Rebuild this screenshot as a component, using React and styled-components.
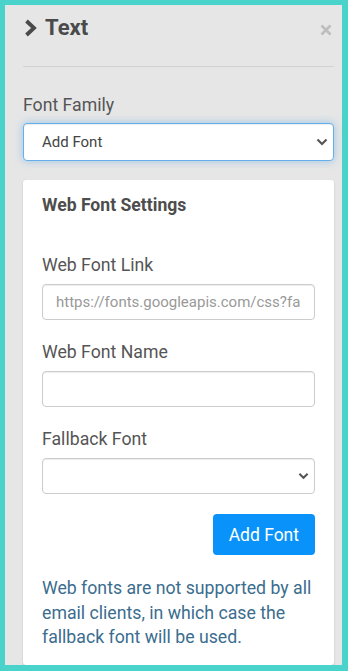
import React from "react";
import styled, { createGlobalStyle } from "styled-components";

const Global = createGlobalStyle`
  html, body { margin: 0; padding: 0; background: #fff; }
  body { font-family: Roboto, "Liberation Sans", Arial, sans-serif; }
  *, *::before, *::after { box-sizing: border-box; }
`;

const Frame = styled.div`
  width: 348px;
  height: 671px;
  border: 5px solid #4ad3cb;
  border-right-width: 6px;
  border-bottom-width: 6px;
  background: #e6e6e6;
  overflow: hidden;
`;

const Panel = styled.div`
  padding: 0 8px 0 18px;
`;

const Header = styled.div`
  display: flex;
  justify-content: space-between;
  align-items: flex-start;
  padding-top: 10px;
  margin-bottom: 25px;
`;

const Title = styled.h2`
  margin: 0;
  display: flex;
  align-items: center;
  gap: 8px;
  font-size: 22px;
  line-height: 26px;
  font-weight: 700;
  color: #4a4a4a;
  padding-left: 1px;
`;

const Close = styled.button`
  border: 0;
  background: none;
  padding: 0;
  margin: 9px 2px 0 0;
  width: 12px;
  height: 12px;
  display: flex;
  cursor: pointer;
`;

const Divider = styled.hr`
  margin: 0 0 26px;
  border: 0;
  border-top: 1px solid #d3d3d3;
`;

const Label = styled.label`
  display: block;
  font-size: 17.7px;
  line-height: 24.3px;
  color: #555;
  margin-bottom: ${(p) => p.$gap || 7}px;
`;

const SelectWrap = styled.div`
  position: relative;
  svg {
    position: absolute;
    right: ${(p) => p.$arrowRight}px;
    top: 50%;
    transform: translateY(-50%);
    pointer-events: none;
  }
`;

const Select = styled.select`
  display: block;
  width: 100%;
  height: ${(p) => (p.$focus ? 38 : 36)}px;
  appearance: none;
  -webkit-appearance: none;
  background: #fff;
  border: 1px solid ${(p) => (p.$focus ? "#66afe9" : "#ccc")};
  border-radius: 4px;
  box-shadow: ${(p) =>
    p.$focus
      ? "inset 0 1px 1px rgba(0,0,0,.075), 0 0 8px rgba(102,175,233,.6)"
      : "inset 0 1px 1px rgba(0,0,0,.075)"};
  padding: 0 30px 0 18px;
  font-family: inherit;
  font-size: 15px;
  color: #444;
  outline: none;
`;

const Card = styled.div`
  margin-top: 19px;
  background: #fff;
  border-radius: 3px;
  box-shadow: 0 1px 2px rgba(0, 0, 0, 0.18);
  padding: 13px 19px 16px;
`;

const CardTitle = styled.h3`
  margin: 0 0 35px;
  font-size: 17.6px;
  line-height: 24.3px;
  font-weight: 700;
  color: #4d4d4d;
`;

const Field = styled.div`
  margin-bottom: 20px;
`;

const Input = styled.input`
  display: block;
  width: 100%;
  height: 36px;
  border: 1px solid #ccc;
  border-radius: 4px;
  box-shadow: inset 0 1px 1px rgba(0, 0, 0, 0.075);
  padding: 0 13px;
  font-family: inherit;
  font-size: 15px;
  color: #555;
  outline: none;
  &::placeholder {
    color: #999;
  }
`;

const ButtonRow = styled.div`
  display: flex;
  justify-content: flex-end;
`;

const Button = styled.button`
  height: 41px;
  padding: 0 16px;
  border: 0;
  border-radius: 4px;
  background: #0993fa;
  color: #fff;
  font-family: inherit;
  font-size: 17.5px;
  cursor: pointer;
`;

const Note = styled.p`
  margin: 21px 0 0;
  font-size: 17.7px;
  line-height: 24.3px;
  color: #3a6d8e;
`;

const ChevronDown = ({ w = 12 }) => (
  <svg width={w} height="8" viewBox="0 0 12 8" aria-hidden="true">
    <polyline points="1.5,1.5 6,6 10.5,1.5" fill="none" stroke="#555" strokeWidth="2.2" />
  </svg>
);

export default function App() {
  return (
    <>
      <Global />
      <Frame>
        <Panel>
          <Header>
            <Title>
              <svg width="13" height="18" viewBox="0 0 13 18" aria-hidden="true">
                <polyline points="2.5,2 10,9 2.5,16" fill="none" stroke="#4a4a4a" strokeWidth="3.8" strokeLinejoin="miter" />
              </svg>
              Text
            </Title>
            <Close aria-label="Close">
              <svg width="12" height="12" viewBox="0 0 12 12">
                <path d="M1.5 1.5 L10.5 10.5 M10.5 1.5 L1.5 10.5" stroke="#bdbdbd" strokeWidth="2.6" />
              </svg>
            </Close>
          </Header>
          <Divider />
          <Label $gap={6}>Font Family</Label>
          <SelectWrap $arrowRight={6}>
            <Select $focus defaultValue="add">
              <option value="add">Add Font</option>
            </Select>
            <ChevronDown />
          </SelectWrap>
          <Card>
            <CardTitle>Web Font Settings</CardTitle>
            <Field>
              <Label>Web Font Link</Label>
              <Input placeholder="https://fonts.googleapis.com/css?family=Roboto" />
            </Field>
            <Field>
              <Label>Web Font Name</Label>
              <Input />
            </Field>
            <Field>
              <Label>Fallback Font</Label>
              <SelectWrap $arrowRight={6}>
                <Select defaultValue="">
                  <option value=""></option>
                </Select>
                <ChevronDown w={11} />
              </SelectWrap>
            </Field>
            <ButtonRow>
              <Button>Add Font</Button>
            </ButtonRow>
            <Note>
              Web fonts are not supported by all email clients, in which case the fallback font will be used.
            </Note>
          </Card>
        </Panel>
      </Frame>
    </>
  );
}
